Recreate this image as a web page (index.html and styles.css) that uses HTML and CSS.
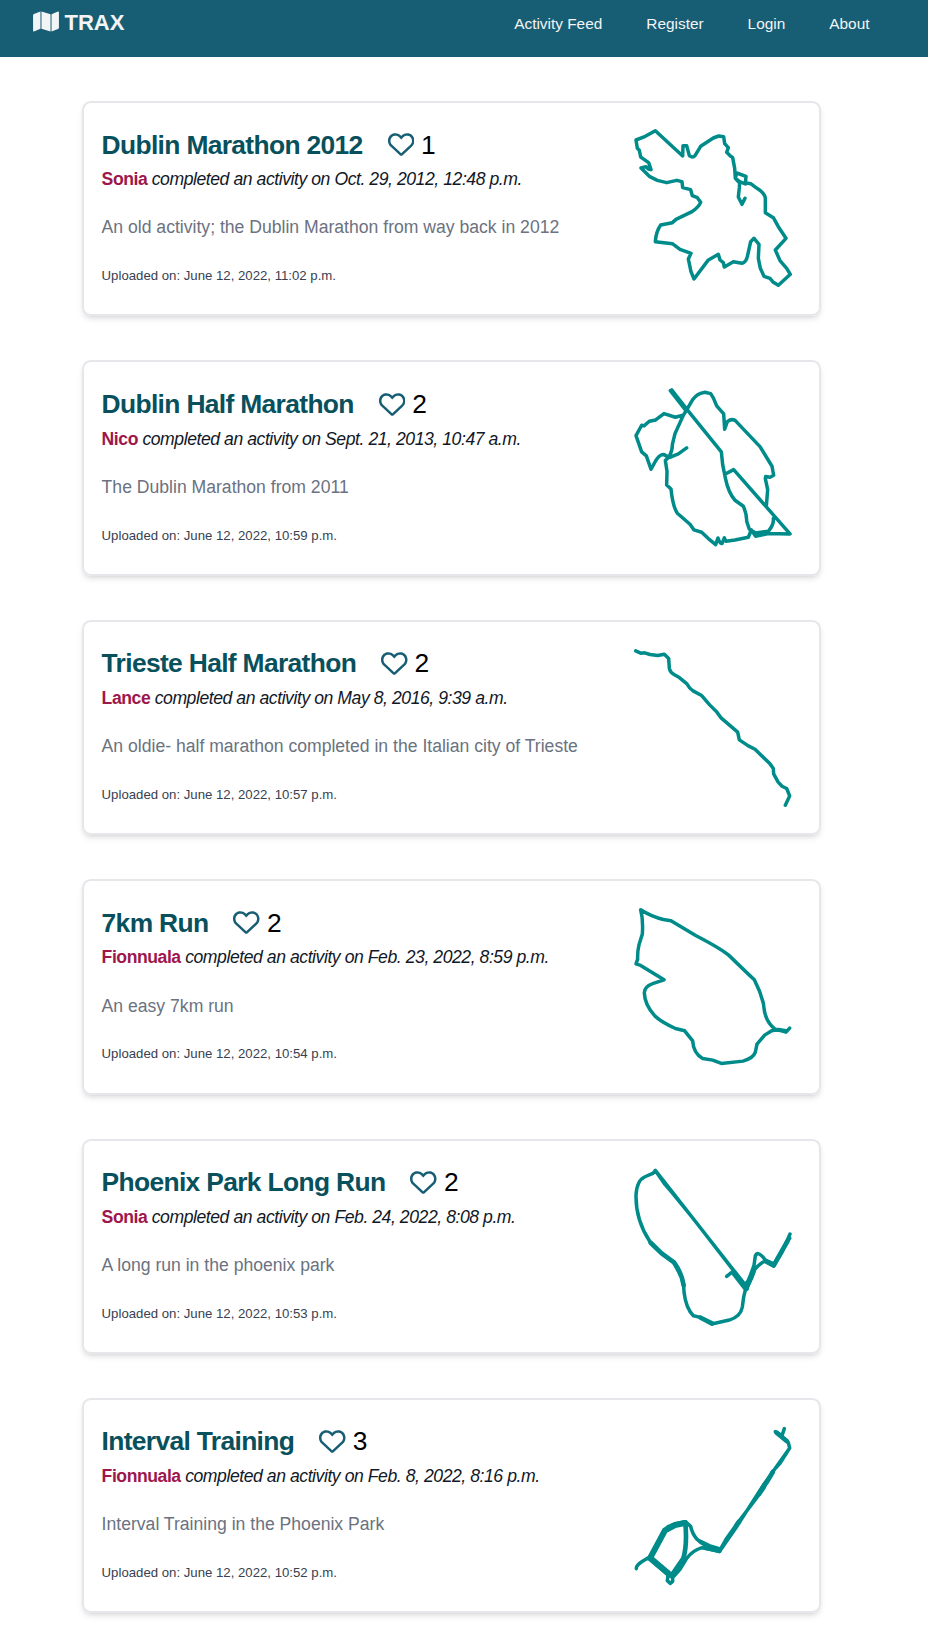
FILE: index.html
```
<!DOCTYPE html>
<html lang="en">
<head>
<meta charset="utf-8">
<title>TRAX</title>
<link rel="stylesheet" href="styles.css">
</head>
<body>
<header class="header">
  <a class="brand"><svg class="brand-icon" viewBox="0 0 576 512"><path d="M0 117.660v346.320c0 11.320 11.430 19.060 21.940 14.860L165 416V32L20.120 87.950A32.006 32.006 0 0 0 0 117.660zM187 416l202 64V96L187 32v384zM554.060 33.160L411 96v384l144.880-55.950A31.996 31.996 0 0 0 576 394.340V48.020c0-11.320-11.430-19.060-21.940-14.860z"/></svg><span class="brand-name">TRAX</span></a>
  <nav class="nav"><a>Activity Feed</a><a>Register</a><a>Login</a><a>About</a></nav>
</header>
<main class="feed">
  <article class="card">
    <div class="info">
      <div class="title-row"><h2 class="title">Dublin Marathon 2012</h2><svg class="heart" viewBox="0 0 512 512"><use href="#heart"/></svg><span class="count">1</span></div>
      <p class="byline"><b class="user">Sonia</b> <i class="when">completed an activity on Oct. 29, 2012, 12:48 p.m.</i></p>
      <p class="desc">An old activity; the Dublin Marathon from way back in 2012</p>
      <p class="uploaded">Uploaded on: June 12, 2022, 11:02 p.m.</p>
    </div>
    <svg class="track" viewBox="0 0 570 540"><path d="M375 250L366 268L355 246L358 218L359 204L346 190L350 174L378 184L376 207L359 200L346 190L344 160L338 128L329 121L320 112L325 98L314 86L311 65L296 63L280 69L242 94L225 122Q218 130 208 122L200 92L189 92L188 123L106 47L76 64L48 75L52 100L58 106L62 126L72 133L86 143L93 164L85 162L78 155L63 159L88 184L112 196L140 203L170 196L186 200L188 218L212 224L217 242L232 248L242 262Q236 276 216 290L168 313L157 323L122 330Q108 350 106 380L157 386L180 403L213 415L205 432L213 470L222 492L264 436L295 418L300 435L310 443L313 456L340 440L366 445Q378 442 382 425L392 380L402 370L417 388L415 430L421 460L432 484L450 490L460 502L475 511L511 478L500 460L480 437L466 405L498 370L475 335L460 308L436 293L436 250Q434 234 411 220L392 206L376 203"/></svg>
  </article>
  <article class="card">
    <div class="info">
      <div class="title-row"><h2 class="title">Dublin Half Marathon</h2><svg class="heart" viewBox="0 0 512 512"><use href="#heart"/></svg><span class="count">2</span></div>
      <p class="byline"><b class="user">Nico</b> <i class="when">completed an activity on Sept. 21, 2013, 10:47 a.m.</i></p>
      <p class="desc">The Dublin Marathon from 2011</p>
      <p class="uploaded">Uploaded on: June 12, 2022, 10:59 p.m.</p>
    </div>
    <svg class="track" viewBox="0 -1.800 570 540"><path d="M151 48L198 108M155 46L202 106L304 232L308 270L316 310Q325 355 345 377L370 395Q381 420 380 440L388 464L407 475L445 470Q462 450 460 432M200 106L218 75Q232 56 255 53L272 57L280 70L290 94L311 118L314 164L322 141Q335 131 346 138L420 216L456 275L461 302L450 308L437 306L436 312L443 345L439 395M316 298L341 285L510 478L445 477L407 485L394 466L385 488L345 496L318 500L313 490L306 507Q298 505 294 490L287 510L265 492L245 473L222 466L210 449L172 416Q158 395 153 343L140 331L141 290L136 258L148 246Q158 225 157 210L165 177L190 122L200 106M189 122L166 128L132 117L107 136L88 140L72 154L65 152L48 183L65 232L79 244L93 284L108 257Q120 238 132 240L148 249L175 238L200 220"/></svg>
  </article>
  <article class="card">
    <div class="info">
      <div class="title-row"><h2 class="title">Trieste Half Marathon</h2><svg class="heart" viewBox="0 0 512 512"><use href="#heart"/></svg><span class="count">2</span></div>
      <p class="byline"><b class="user">Lance</b> <i class="when">completed an activity on May 8, 2016, 9:39 a.m.</i></p>
      <p class="desc">An oldie- half marathon completed in the Italian city of Trieste</p>
      <p class="uploaded">Uploaded on: June 12, 2022, 10:57 p.m.</p>
    </div>
    <svg class="track" viewBox="0 -3.600 570 540"><path d="M47 47L62 54L74 53L90 58L113 61L133 57L146 70L148 99Q150 111 162 118L178 127L200 145Q208 160 219 167L245 181L269 209L290 230L304 249L353 291L358 314L385 332L405 342L450 386L460 400L461 416L474 440L486 453L500 460L509 482L496 510"/></svg>
  </article>
  <article class="card">
    <div class="info">
      <div class="title-row"><h2 class="title">7km Run</h2><svg class="heart" viewBox="0 0 512 512"><use href="#heart"/></svg><span class="count">2</span></div>
      <p class="byline"><b class="user">Fionnuala</b> <i class="when">completed an activity on Feb. 23, 2022, 8:59 p.m.</i></p>
      <p class="desc">An easy 7km run</p>
      <p class="uploaded">Uploaded on: June 12, 2022, 10:54 p.m.</p>
    </div>
    <svg class="track" viewBox="0 -5.400 570 540"><path d="M509 400L498 412L465 403Q436 380 432 340L430 325L419 290L403 255L385 238L326 181Q300 160 227 122L153 78L130 74Q95 66 62 45Q70 75 67 118L57 150Q52 170 53 193L48 207L62 212L132 255L100 266Q72 276 73 295Q74 330 105 364Q125 382 166 401L194 408L218 438Q220 475 248 491L278 496L304 506L369 499Q400 490 406 472L411 448L434 421L455 408L475 404L498 408"/></svg>
  </article>
  <article class="card">
    <div class="info">
      <div class="title-row"><h2 class="title">Phoenix Park Long Run</h2><svg class="heart" viewBox="0 0 512 512"><use href="#heart"/></svg><span class="count">2</span></div>
      <p class="byline"><b class="user">Sonia</b> <i class="when">completed an activity on Feb. 24, 2022, 8:08 p.m.</i></p>
      <p class="desc">A long run in the phoenix park</p>
      <p class="uploaded">Uploaded on: June 12, 2022, 10:53 p.m.</p>
    </div>
    <svg class="track" viewBox="0 -7.200 570 540"><path d="M510 236L486 290L461 332L436 316Q400 335 396 365L378 404L336 350L320 363M509 248L463 326L436 314Q414 284 406 301L402 330L391 360L378 391L340 343L106 45L100 53L75 64Q50 75 48 120Q47 195 90 259Q110 285 160 320L178 352Q192 375 192 410Q198 460 220 481L242 486L275 506L328 494Q362 484 367 455L371 425L378 395L340 355M108 48L135 87L155 110L220 190L338 342L376 400"/><path class="medium" d="M92 262L125 294L163 322Q186 355 191 390M242 487L276 504M502 258L461 330L438 318M345 354L378 400L400 350M382 382L380 400"/></svg>
  </article>
  <article class="card">
    <div class="info">
      <div class="title-row"><h2 class="title">Interval Training</h2><svg class="heart" viewBox="0 0 512 512"><use href="#heart"/></svg><span class="count">3</span></div>
      <p class="byline"><b class="user">Fionnuala</b> <i class="when">completed an activity on Feb. 8, 2022, 8:16 p.m.</i></p>
      <p class="desc">Interval Training in the Phoenix Park</p>
      <p class="uploaded">Uploaded on: June 12, 2022, 10:52 p.m.</p>
    </div>
    <svg class="track" viewBox="0 -9 570 540"><path d="M493 41L486 62L466 50L505 83L509 99L480 145L457 170L430 222L352 325L318 373L300 405Q255 398 231 373Q216 355 212 334L196 320L169 326L144 335L129 352L92 424L64 441Q48 452 49 461M507 102L427 215L350 335L299 409L246 398Q220 405 200 430L180 463L158 488L158 499L151 505L142 497L144 480L84 429M300 402L268 392L240 378"/><path class="medium" d="M470 53L500 78M458 172L440 202M434 208L418 236M357 320L350 330M258 398L298 408"/><path class="thick" d="M93 424L135 346L165 330L194 324M92 430L120 454L151 480"/><path class="medium" d="M196 322Q202 390 190 430L157 478"/></svg>
  </article>
</main>
<svg class="defs"><defs><path id="heart" d="M244 84L255.100 96L267 84.020C300.600 51.370 347 36.510 392.600 44.100C461.500 55.580 512 115.200 512 185.100V190.900C512 232.400 494.800 272.100 464.400 300.400L283.700 469.100C276.200 476.100 266.300 480 256 480C245.700 480 235.800 476.100 228.300 469.100L47.590 300.400C17.230 272.100 0 232.400 0 190.900V185.100C0 115.200 50.520 55.580 119.400 44.100C164.100 36.510 211.400 51.370 244 84ZM255.100 163.900L210.100 117.100C188.400 96.280 157.600 86.400 127.300 91.440C81.550 99.070 48 138.700 48 185.100V190.900C48 219.100 59.710 246.100 80.340 265.300L256 429.300L431.700 265.300C452.300 246.100 464 219.100 464 190.900V185.100C464 138.700 430.400 99.070 384.700 91.440C354.400 86.400 323.600 96.280 301.900 117.100L255.100 163.900Z"/></defs></svg>
</body>
</html>
```
FILE: styles.css
```
* { box-sizing: border-box; }
body {
  margin: 0;
  background: #fff;
  color: #000;
  font-family: "Liberation Sans", Arial, sans-serif;
}
h2, p { margin: 0; }
.header {
  height: 57px;
  padding: 7px 58.500px 0 33px;
  background: #175e75;
  color: #f3f4f6;
  display: flex;
  justify-content: space-between;
  align-items: flex-start;
}
.brand { display: flex; align-items: flex-start; gap: 5.500px; }
.brand-icon { width: 26px; height: 23px; margin-top: 3px; fill: currentColor; }
.brand-name { font-size: 22px; font-weight: 700; line-height: 31px; }
.nav { display: flex; gap: 44px; font-size: 15.400px; line-height: 34px; white-space: nowrap; }
.feed {
  width: 739px;
  margin: 44px 0 0 82px;
  padding-bottom: 26px;
  display: flex;
  flex-direction: column;
  gap: 44px;
}
.card {
  height: 215.400px;
  padding: 0 9px 0 17.600px;
  border: 2px solid #e5e7eb;
  border-radius: 8.800px;
  box-shadow: 0 4px 6px -1px rgba(0, 0, 0, .1), 0 2px 4px -2px rgba(0, 0, 0, .1);
  display: flex;
  justify-content: space-between;
}
.info { padding-top: 23.500px; white-space: nowrap; }
.title-row { display: flex; align-items: center; height: 36px; }
.title { font-size: 26.400px; line-height: 36px; color: #08505c; letter-spacing: -.66px; }
.heart { width: 26.500px; height: 26.500px; margin: 0 7px 0 25px; fill: #175e75; }
.count { font-size: 26.400px; line-height: 36px; }
.byline { margin-top: 2.700px; font-size: 17.600px; line-height: 28px; color: #111827; letter-spacing: -.44px; }
.user { color: #9d174d; }
.desc { margin-top: 20.300px; font-size: 17.600px; line-height: 28px; color: #6b7280; }
.uploaded { margin-top: 24.700px; font-size: 13.200px; line-height: 20px; color: #374151; }
.track {
  width: 190px;
  height: 180px;
  margin-top: 12px;
  flex: none;
  fill: none;
  stroke: #008b8b;
  stroke-width: 10.500;
  stroke-linecap: round;
  stroke-linejoin: round;
}
.medium { stroke-width: 14; }
.thick { stroke-width: 18; }
.defs { position: absolute; width: 0; height: 0; }
```
